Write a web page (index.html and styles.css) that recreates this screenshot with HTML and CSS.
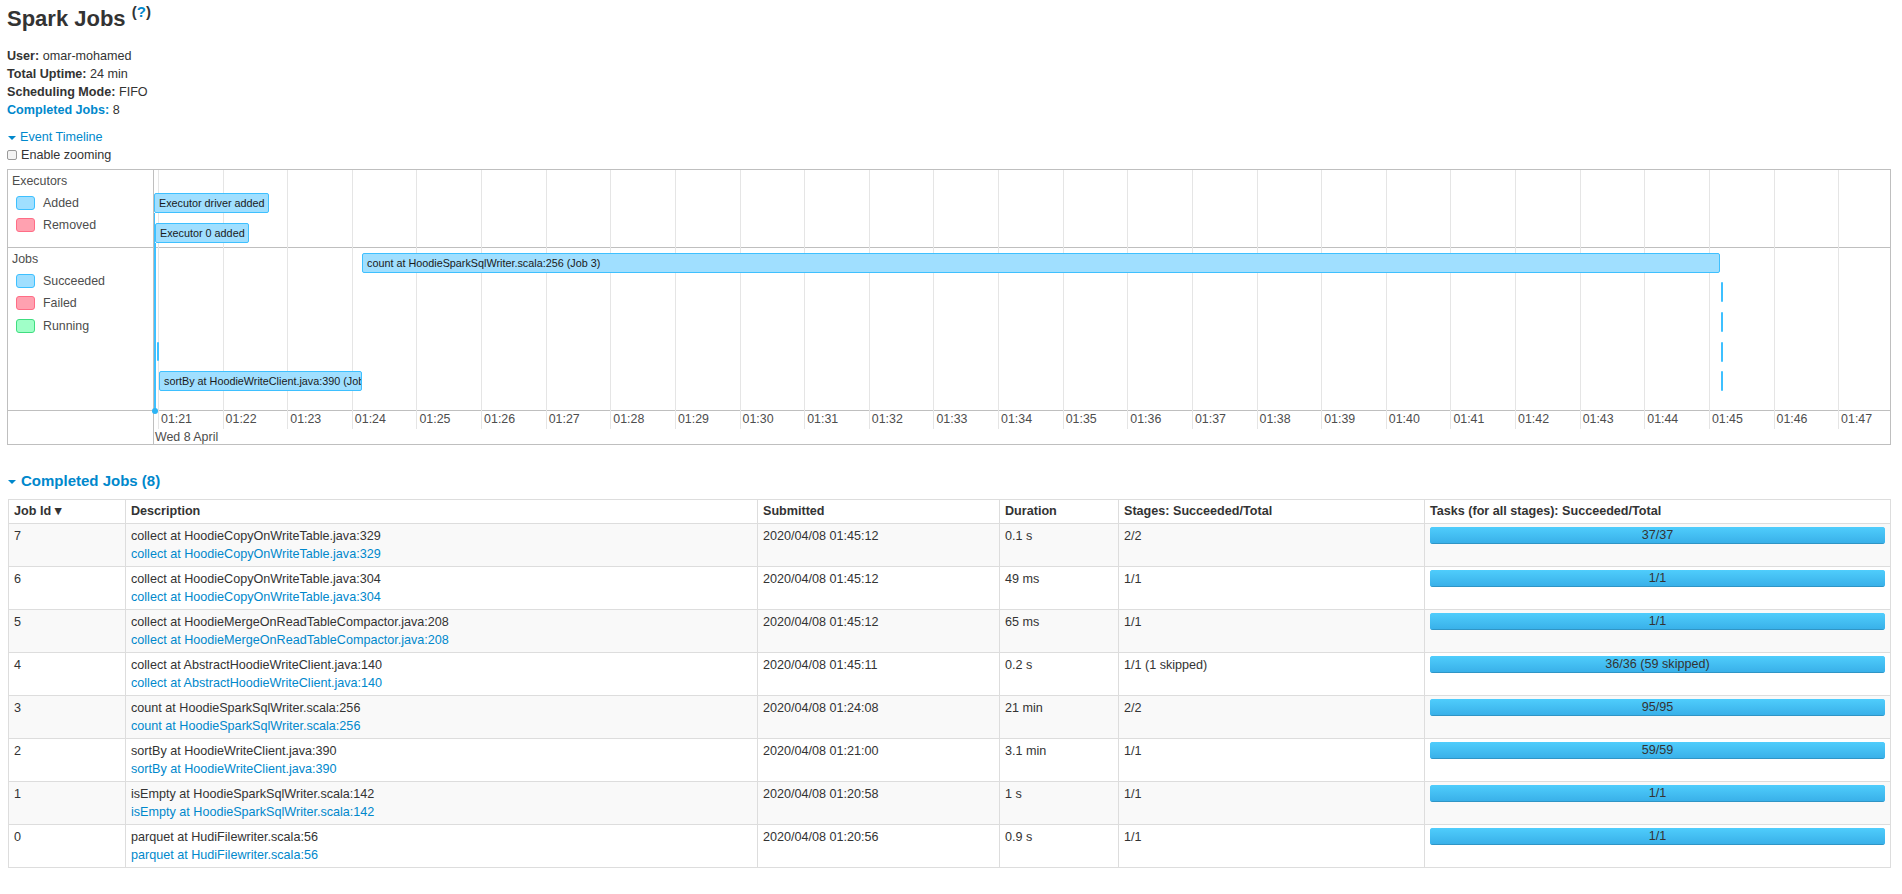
FILE: index.html
```html
<!DOCTYPE html>
<html lang="en">
<head>
  <meta charset="UTF-8" />
  <title>Spark Jobs</title>
  <link rel="stylesheet" href="styles.css">
</head>
<body>
  <div class="page">
    <h3 class="title">Spark Jobs <sup>(<a href="#">?</a>)</sup></h3>

    <ul class="summary">
      <li><strong>User:</strong> omar-mohamed</li>
      <li><strong>Total Uptime:</strong> 24 min</li>
      <li><strong>Scheduling Mode:</strong> FIFO</li>
      <li><a href="#completed"><strong>Completed Jobs:</strong></a> 8</li>
    </ul>

    <div class="event-toggle">
      <span class="arrow-open"></span><a href="#">Event Timeline</a>
    </div>
    <label class="zoom-toggle"><input type="checkbox" class="zoom-check">Enable zooming</label>

    <div class="timeline">
      <div class="tl-label tl-row1">
        <div class="tl-group-name">Executors</div>
        <div class="legend-row"><span class="swatch sw-added"></span>Added</div>
        <div class="legend-row"><span class="swatch sw-removed"></span>Removed</div>
      </div>
      <div class="tl-label tl-row2">
        <div class="tl-group-name">Jobs</div>
        <div class="legend-row"><span class="swatch sw-added"></span>Succeeded</div>
        <div class="legend-row"><span class="swatch sw-removed"></span>Failed</div>
        <div class="legend-row"><span class="swatch sw-running"></span>Running</div>
      </div>
      <div class="tl-label tl-row3"></div>

      <div class="tl-group tl-row1"></div>
      <div class="tl-group tl-row2"></div>
      <div class="tl-axis"></div>

      <div class="tl-canvas" id="tl-canvas">
        <div class="tl-line" style="left:0px; top:43px; height:197px"></div>
        <div class="tl-line" style="left:1px; top:73px; height:167px"></div>
        <div class="tl-dot" style="left:-2px; top:238px"></div>

        <div class="tl-item" style="left:0px; top:23px; width:115px">Executor driver added</div>
        <div class="tl-item" style="left:1px; top:53px; width:94px">Executor 0 added</div>

        <div class="tl-item" style="left:208px; top:83px; width:1358px">count at HoodieSparkSqlWriter.scala:256 (Job 3)</div>
        <div class="tl-item tl-point" style="left:1567px; top:112px"></div>
        <div class="tl-item tl-point" style="left:1567px; top:142px"></div>
        <div class="tl-item tl-point" style="left:1567px; top:172px"></div>
        <div class="tl-item tl-point" style="left:1567px; top:201px"></div>
        <div class="tl-item tl-point" style="left:3px; top:172px; height:19px"></div>
        <div class="tl-item" style="left:5px; top:201px; width:203px">sortBy at HoodieWriteClient.java:390 (Job 2)</div>

        <div class="tl-major" style="left:1px">Wed 8 April</div>
      </div>
    </div>

    <h4 class="section" id="completed"><span class="arrow-open"></span>Completed Jobs (8)</h4>

    <table class="jobs">
      <thead>
        <tr>
          <th class="c-id">Job Id&nbsp;<span class="sort">&#x25BC;</span></th>
          <th class="c-desc">Description</th>
          <th class="c-sub">Submitted</th>
          <th class="c-dur">Duration</th>
          <th class="c-stages">Stages: Succeeded/Total</th>
          <th>Tasks (for all stages): Succeeded/Total</th>
        </tr>
      </thead>
      <tbody>
        <tr>
          <td>7</td>
          <td>collect at HoodieCopyOnWriteTable.java:329<br><a href="#">collect at HoodieCopyOnWriteTable.java:329</a></td>
          <td>2020/04/08 01:45:12</td>
          <td>0.1 s</td>
          <td>2/2</td>
          <td><div class="progress"><span class="progress-text">37/37</span><div class="bar" style="width:100%"></div></div></td>
        </tr>
        <tr>
          <td>6</td>
          <td>collect at HoodieCopyOnWriteTable.java:304<br><a href="#">collect at HoodieCopyOnWriteTable.java:304</a></td>
          <td>2020/04/08 01:45:12</td>
          <td>49 ms</td>
          <td>1/1</td>
          <td><div class="progress"><span class="progress-text">1/1</span><div class="bar" style="width:100%"></div></div></td>
        </tr>
        <tr>
          <td>5</td>
          <td>collect at HoodieMergeOnReadTableCompactor.java:208<br><a href="#">collect at HoodieMergeOnReadTableCompactor.java:208</a></td>
          <td>2020/04/08 01:45:12</td>
          <td>65 ms</td>
          <td>1/1</td>
          <td><div class="progress"><span class="progress-text">1/1</span><div class="bar" style="width:100%"></div></div></td>
        </tr>
        <tr>
          <td>4</td>
          <td>collect at AbstractHoodieWriteClient.java:140<br><a href="#">collect at AbstractHoodieWriteClient.java:140</a></td>
          <td>2020/04/08 01:45:11</td>
          <td>0.2 s</td>
          <td>1/1 (1 skipped)</td>
          <td><div class="progress"><span class="progress-text">36/36 (59 skipped)</span><div class="bar" style="width:100%"></div></div></td>
        </tr>
        <tr>
          <td>3</td>
          <td>count at HoodieSparkSqlWriter.scala:256<br><a href="#">count at HoodieSparkSqlWriter.scala:256</a></td>
          <td>2020/04/08 01:24:08</td>
          <td>21 min</td>
          <td>2/2</td>
          <td><div class="progress"><span class="progress-text">95/95</span><div class="bar" style="width:100%"></div></div></td>
        </tr>
        <tr>
          <td>2</td>
          <td>sortBy at HoodieWriteClient.java:390<br><a href="#">sortBy at HoodieWriteClient.java:390</a></td>
          <td>2020/04/08 01:21:00</td>
          <td>3.1 min</td>
          <td>1/1</td>
          <td><div class="progress"><span class="progress-text">59/59</span><div class="bar" style="width:100%"></div></div></td>
        </tr>
        <tr>
          <td>1</td>
          <td>isEmpty at HoodieSparkSqlWriter.scala:142<br><a href="#">isEmpty at HoodieSparkSqlWriter.scala:142</a></td>
          <td>2020/04/08 01:20:58</td>
          <td>1 s</td>
          <td>1/1</td>
          <td><div class="progress"><span class="progress-text">1/1</span><div class="bar" style="width:100%"></div></div></td>
        </tr>
        <tr>
          <td>0</td>
          <td>parquet at HudiFilewriter.scala:56<br><a href="#">parquet at HudiFilewriter.scala:56</a></td>
          <td>2020/04/08 01:20:56</td>
          <td>0.9 s</td>
          <td>1/1</td>
          <td><div class="progress"><span class="progress-text">1/1</span><div class="bar" style="width:100%"></div></div></td>
        </tr>
      </tbody>
    </table>
  </div>

  <script>
    // minute grid for the event timeline (01:21 .. 01:47)
    const canvas = document.getElementById("tl-canvas");
    const minuteWidth = 64.62;

    for (let i = 0; i <= 26; i++) {
      const x = 4 + i * minuteWidth;

      const line = document.createElement("div");
      line.className = "tl-grid";
      line.style.left = x + "px";
      canvas.insertBefore(line, canvas.firstChild);

      const tick = document.createElement("div");
      tick.className = "tl-tick";
      tick.style.left = (x + 3) + "px";
      tick.textContent = "01:" + (21 + i);
      canvas.appendChild(tick);
    }
  </script>
</body>
</html>
```

FILE: styles.css
```css
body {
  margin: 0;
  font-family: "Liberation Sans", Arial, sans-serif;
  font-size: 12.6px;
  line-height: 18px;
  color: #333;
  background: #fff;
}

a {
  color: #0088cc;
  text-decoration: none;
}

.page {
  padding: 0 11px 20px 7px;
}

.title {
  font-size: 22px;
  line-height: 26px;
  margin: 6px 0 0;
  font-weight: bold;
}

.title sup {
  font-size: 15px;
  vertical-align: baseline;
  position: relative;
  top: -9px;
}

.summary {
  list-style: none;
  margin: 13px 0 0;
  padding: 0;
}

.event-toggle {
  margin-top: 9px;
}

.arrow-open {
  display: inline-block;
  width: 0;
  height: 0;
  border-left: 4px solid transparent;
  border-right: 4px solid transparent;
  border-top: 4.5px solid #0088cc;
  vertical-align: middle;
  margin: 0 4px 0 1px;
}

.zoom-toggle {
  display: block;
}

.zoom-check {
  -webkit-appearance: none;
  appearance: none;
  display: inline-block;
  width: 10px;
  height: 10px;
  margin: 0 4px 0 0;
  border: 1px solid #9a9a9a;
  border-radius: 2px;
  background: #f4f4f4;
  vertical-align: middle;
  position: relative;
  top: -1px;
}

/* event timeline */

.timeline {
  margin-top: 5px;
  border: 1px solid #bfbfbf;
  display: grid;
  grid-template-columns: 146px 1fr;
  grid-template-rows: 78px 163px 33px;
  font-size: 12.4px;
  color: #4d4d4d;
  overflow: hidden;
}

.tl-row1 { grid-row: 1; }
.tl-row2 { grid-row: 2; }
.tl-row3 { grid-row: 3; }

.tl-label {
  grid-column: 1;
  border-right: 1px solid #bfbfbf;
  border-bottom: 1px solid #bfbfbf;
  padding: 3px 0 0 4px;
}

.tl-label.tl-row3 {
  border-bottom: none;
}

.tl-group-name {
  line-height: 16px;
  margin-bottom: 2.5px;
}

.legend-row {
  display: flex;
  align-items: center;
  height: 22.5px;
}

.swatch {
  box-sizing: border-box;
  width: 19px;
  height: 14px;
  margin: 0 8px 0 4px;
  border: 1px solid;
  border-radius: 3px;
}

.sw-added {
  background: #a0dfff;
  border-color: #3ec0ff;
}

.sw-removed {
  background: #ffa1b0;
  border-color: #ff6d86;
}

.sw-running {
  background: #a0ffc8;
  border-color: #40dd80;
}

.tl-group {
  grid-column: 2;
  border-bottom: 1px solid #bfbfbf;
}

.tl-axis {
  grid-column: 2;
  grid-row: 3;
}

.tl-canvas {
  grid-column: 2;
  grid-row: 1 / 4;
  position: relative;
}

.tl-grid {
  position: absolute;
  top: 0;
  width: 1px;
  height: 259px;
  background: #e5e5e5;
}

.tl-tick {
  position: absolute;
  top: 241px;
  line-height: 16px;
  white-space: nowrap;
}

.tl-major {
  position: absolute;
  top: 259px;
  line-height: 16px;
  white-space: nowrap;
}

.tl-line {
  position: absolute;
  width: 1px;
  background: #3ec0ff;
}

.tl-dot {
  position: absolute;
  width: 6px;
  height: 6px;
  border-radius: 50%;
  background: #2cb4f5;
}

.tl-item {
  position: absolute;
  box-sizing: border-box;
  height: 20px;
  padding: 0 4px;
  background: #a0dfff;
  border: 1px solid #3ec0ff;
  border-radius: 2px;
  font-size: 10.8px;
  line-height: 18px;
  color: #1a1a1a;
  white-space: nowrap;
  overflow: hidden;
}

.tl-item.tl-point {
  width: 2px;
  padding: 0;
  border: none;
  border-radius: 1px;
  background: #3ec0ff;
}

/* completed jobs */

.section {
  font-size: 15px;
  line-height: 20px;
  font-weight: bold;
  color: #0088cc;
  margin: 26px 0 0;
}

.section .arrow-open {
  margin: 0 5px 0 1px;
}

.jobs {
  margin: 8px 0 0 1px;
  width: calc(100% - 1px);
  border-collapse: collapse;
  table-layout: fixed;
}

.jobs th,
.jobs td {
  border: 1px solid #ddd;
  text-align: left;
  vertical-align: top;
  padding: 3px 5px;
}

.jobs th {
  padding: 2px 5px 3px;
  font-weight: bold;
  background: #fff;
}

.jobs th .sort {
  font-size: 9.5px;
  font-family: "DejaVu Sans", sans-serif;
  vertical-align: 1px;
}

.jobs tbody tr:nth-child(odd) td {
  background: #f9f9f9;
}

.c-id { width: 106px; }
.c-desc { width: 621px; }
.c-sub { width: 231px; }
.c-dur { width: 108px; }
.c-stages { width: 295px; }

.progress {
  position: relative;
  height: 17px;
  border-radius: 3px;
  overflow: hidden;
  background: #f5f5f5;
}

.progress .bar {
  height: 100%;
  background: #3ec0ff linear-gradient(to bottom, #4fcdfc, #38afe8);
  box-shadow: inset 0 -1px 0 rgba(0, 0, 0, 0.15);
}

.progress-text {
  position: absolute;
  left: 0;
  right: 0;
  text-align: center;
  line-height: 17px;
  color: #333;
}
```
